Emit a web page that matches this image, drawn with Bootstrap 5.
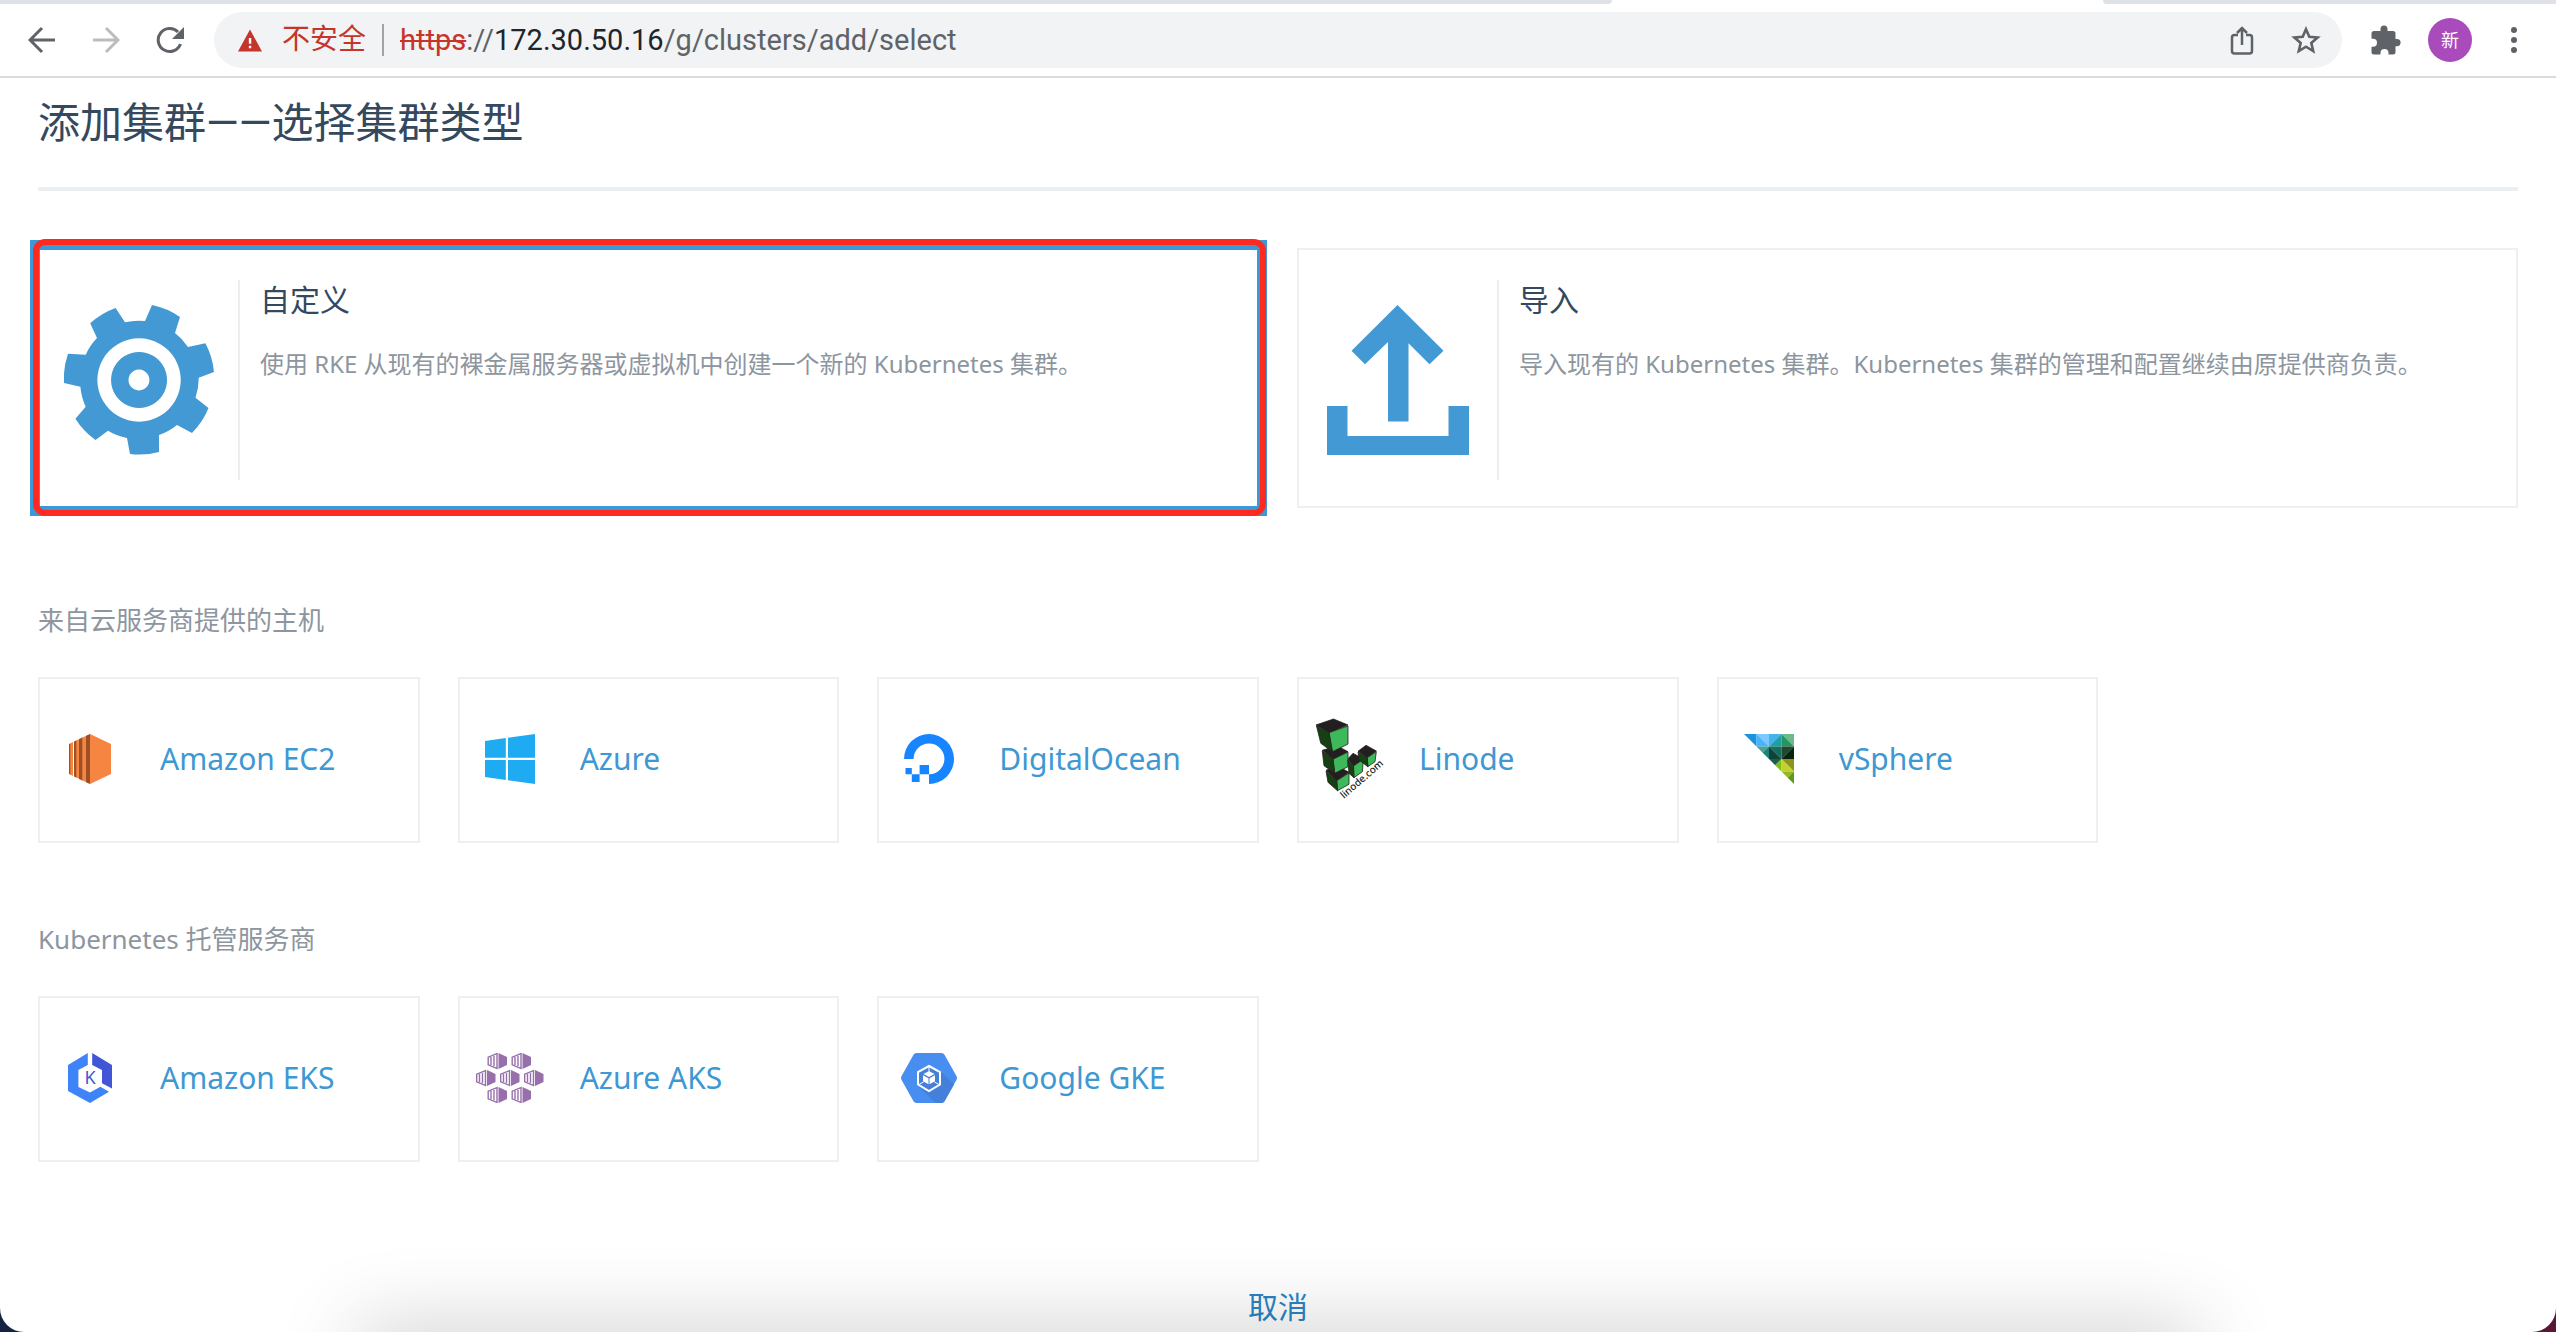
<!DOCTYPE html>
<html lang="zh-CN">
<head>
<meta charset="utf-8">
<meta name="viewport" content="width=device-width, initial-scale=1">
<title>添加集群——选择集群类型</title>
<link href="https://cdn.jsdelivr.net/npm/bootstrap@5.3.0/dist/css/bootstrap.min.css" rel="stylesheet">
<style>
  body { background: linear-gradient(90deg, #14233f 50%, #5a1735 50%); font-family: "Noto Sans", "Noto Sans CJK SC", sans-serif; color: #34495e; }
  .browser { background: #fff; border-radius: 0 0 24px 24px; }
  .tabstrip { height: 4px; background: #fff; }
  .tabstrip span { background: #dee1e6; }
  .tabs-left { width: 1612px; border-bottom-right-radius: 8px; }
  .tabs-right { width: 453px; border-bottom-left-radius: 8px; }
  .toolbar { height: 74px; padding: 0 10px; border-bottom: 2px solid #dadcdc; }
  .tool { width: 64px; height: 56px; color: #5f6368; }
  .omnibox { height: 56px; margin: 0 12px; padding: 0 4px 0 24px; background: #f1f3f4; border-radius: 28px; font: 28px/56px Roboto, "Noto Sans CJK SC", sans-serif; color: #5f6368; }
  .insecure { color: #c5352b; }
  .address { font-size: 29px; }
  .bar-sep { width: 2px; height: 32px; margin: 0 16px; background: #a0a4a8; }
  .avatar { width: 44px; height: 44px; background: #a94bba; color: #fff; font-size: 18px; line-height: 44px; }
  .page { padding: 16px 38px 0; }
  .page-title { font-family: Roboto, "Noto Sans CJK SC", sans-serif; font-size: 42px; line-height: 60px; padding-bottom: 33px; border-bottom: 4px solid #eceff1; margin-bottom: 57px; font-weight: 400; }
  .tiles { display: grid; gap: 38px; }
  .tiles-wide { grid-template-columns: repeat(2, 1fr); }
  .tiles-small { grid-template-columns: repeat(6, 1fr); }
  .tile { border: 2px solid #ecf0f0; background: #fff; color: #3d98d3; text-decoration: none; }
  .tile-wide { height: 260px; padding: 30px 0 26px; }
  .tile-wide .pic { width: 200px; border-right: 2px solid #eceff1; }
  .tile-wide .info { padding: 0 20px; }
  .tile-wide h2 { font-size: 30px; line-height: 40px; margin: 0 0 26px; font-weight: 400; color: #34495e; }
  .tile-wide p { font-size: 24px; line-height: 36px; margin: 0; color: #8d959e; }
  .picked { border-color: #3d98d8; box-shadow: 0 0 0 8px #3d98d8; }
  .marker { inset: -11px -9px -10px -7px; border: 6px solid #ff2a1f; border-radius: 12px; pointer-events: none; }
  .group-label { font-size: 26px; line-height: 38px; margin: 0 0 38px; color: #8d959e; font-weight: 400; }
  .label-hosts { margin-top: 93px; }
  .label-hosted { margin-top: 77px; }
  .tile-small { height: 166px; padding-bottom: 2px; font-size: 30px; line-height: 40px; }
  .tile-small .pic { width: 100px; margin-right: 20px; }
  .cancel { font-size: 30px; line-height: 44px; margin-top: 123px; color: #2a84c5; }
  .dock-shade { left: 14%; right: 14%; bottom: -40px; height: 40px; box-shadow: 0 0 80px rgba(0,0,0,.27); }
</style>
</head>
<body>
<div class="browser position-relative overflow-hidden min-vh-100">
  <header>
    <div class="tabstrip d-flex justify-content-between"><span class="tabs-left"></span><span class="tabs-right"></span></div>
    <div class="toolbar d-flex align-items-center">
      <button class="tool btn border-0 p-0" aria-label="后退"><svg width="28" height="28" viewBox="0 0 28 28" fill="none" stroke="currentColor" stroke-width="3"><path d="M27 14H3M14 2 2 14l12 12"/></svg></button>
      <button class="tool btn border-0 p-0" aria-label="前进"><svg width="28" height="28" viewBox="0 0 28 28" fill="none" stroke="#babcbe" stroke-width="3"><path d="M1 14h24M14 2l12 12-12 12"/></svg></button>
      <button class="tool btn border-0 p-0" aria-label="重新加载"><svg width="30" height="28" viewBox="0 0 30 28"><path d="M25.500 18A11.500 11.500 0 1 1 23 6" fill="none" stroke="currentColor" stroke-width="3"/><path d="M29 1v12H17z" fill="currentColor"/></svg></button>
      <div class="omnibox d-flex align-items-center flex-grow-1">
        <svg width="24" height="23" viewBox="0 0 25 23" class="me-3"><path d="M12.500 0 25 23H0z" fill="#c5352b"/><path d="M11.300 9h2.500v6h-2.500zM11.300 17h2.500v2.600h-2.500z" fill="#fff"/></svg>
        <span class="insecure ms-1">不安全</span>
        <span class="bar-sep"></span>
        <span class="address flex-grow-1"><span class="insecure text-decoration-line-through">https</span>://<span class="text-dark">172.30.50.16</span>/g/clusters/add/select</span>
        <button class="tool btn border-0 p-0" aria-label="分享"><svg width="24" height="30" viewBox="0 0 24 30" fill="none" stroke="currentColor" stroke-width="2.500"><path d="M8 10H4.500Q2 10 2 12.500V26q0 2.500 2.500 2.500h15Q22 28.500 22 26V12.500Q22 10 19.500 10H16M12 20V3M7 8l5-5 5 5"/></svg></button>
        <button class="tool btn border-0 p-0" aria-label="收藏"><svg width="30" height="28" viewBox="0 0 30 28" fill="none" stroke="currentColor" stroke-width="2.600"><path d="m15 3.200 3.300 7.600 8.300.7-6.300 5.400 1.900 8.100-7.200-4.300L7.800 25l1.900-8.100-6.300-5.400 8.300-.7z"/></svg></button>
      </div>
      <button class="tool btn border-0 p-0" aria-label="扩展程序"><svg width="30" height="30" viewBox="0 0 30 30"><path d="M3 6h6.500V4a3.500 3.500 0 0 1 7 0v2H22q2.500 0 2.500 2.500V14H26a3.600 3.600 0 0 1 0 7.200h-1.500V27q0 2.500-2.500 2.500h-4.500V28a4 4 0 0 0-8 0v1.500H3Q.5 29.500.5 27v-5.200H2a4 4 0 0 0 0-8H.5V8.500Q.5 6 3 6z" fill="currentColor"/></svg></button>
      <button class="tool btn border-0 p-0 d-flex align-items-center justify-content-center" aria-label="用户"><span class="avatar rounded-circle">新</span></button>
      <button class="tool btn border-0 p-0" aria-label="菜单"><svg width="8" height="28" viewBox="0 0 8 28" fill="currentColor"><circle cx="4" cy="4" r="3"/><circle cx="4" cy="14" r="3"/><circle cx="4" cy="24" r="3"/></svg></button>
    </div>
  </header>

  <main class="page">
    <h1 class="page-title">添加集群——选择集群类型</h1>

    <div class="tiles tiles-wide">
      <a href="#" class="tile tile-wide picked d-flex position-relative">
        <span class="pic d-flex align-items-center justify-content-center flex-shrink-0">
          <svg width="150" height="150" viewBox="0 0 150 150" fill="#4299d4"><path fill-rule="evenodd" d="M63 133 66 149A75 75 0 0 0 95 147V130A59 59 0 0 0 113 120L128 128A75 75 0 0 0 144.500 103L131.500 92.700A59 59 0 0 0 134.700 72.700L150 67A75 75 0 0 0 141.400 38.300L124 42A59 59 0 0 0 111 28L116 12A75 75 0 0 0 88 0L81 16A59 59 0 0 0 61 17.300L51.600 3A75 75 0 0 0 26.200 18.300L33 33A59 59 0 0 0 21.700 49.700L4 48.700A75 75 0 0 0 0 78L16.400 81.700A59 59 0 0 0 21.700 101.700L11.400 113.700A75 75 0 0 0 31.500 135L44 125.700A59 59 0 0 0 63 133zM75 33.300a41.700 41.700 0 1 0 .1 0z"/><path fill-rule="evenodd" d="M75 47a28 28 0 1 0 .1 0zM75 64.500a10.500 10.500 0 1 1-.1 0z"/></svg>
        </span>
        <span class="info">
          <h2>自定义</h2>
          <p>使用 RKE 从现有的裸金属服务器或虚拟机中创建一个新的 Kubernetes 集群。</p>
        </span>
        <span class="marker position-absolute"></span>
      </a>
      <a href="#" class="tile tile-wide d-flex">
        <span class="pic d-flex align-items-center justify-content-center flex-shrink-0">
          <svg width="142" height="150" viewBox="0 0 142 150" fill="#4299d4"><path d="m70.500 0 46 45.700-14 13.600-21-21V116.500H61V37L38 59.300 24.500 45.700zM0 101h20.500v30h101v-30H142v49H0z"/></svg>
        </span>
        <span class="info">
          <h2>导入</h2>
          <p>导入现有的 Kubernetes 集群。Kubernetes 集群的管理和配置继续由原提供商负责。</p>
        </span>
      </a>
    </div>

    <h2 class="group-label label-hosts">来自云服务商提供的主机</h2>
    <div class="tiles tiles-small">
      <a href="#" class="tile tile-small d-flex align-items-center">
        <span class="pic d-flex justify-content-center"><svg width="42" height="50" viewBox="0 0 42 50"><path fill="#f58540" d="m21 0 21 10v30L21 50zM1 9.500 4 8v34l-3-1.500zM6 7l5-2v40l-5-2zM12 4l5-2v46l-5-2z"/><path fill="#9d5025" d="m17 1.700 4-1.700v50l-4-1.700zM10 5l3.300-1.500v43L10 45zM5 7.500 7.300 6.500v37L5 42.500zM0 10l1.300-.6v31.200L0 40z"/></svg></span>Amazon EC2</a>
      <a href="#" class="tile tile-small d-flex align-items-center">
        <span class="pic d-flex justify-content-center"><svg width="50" height="50" viewBox="0 0 50 50" fill="#1fabf2"><path d="m0 7 20.800-2.900v19.600H0zM23 3.800 50 0v23.700H23zM0 26h20.800v19.900L0 43zM23 26h27v24l-27-3.800z"/></svg></span>Azure</a>
      <a href="#" class="tile tile-small d-flex align-items-center">
        <span class="pic d-flex justify-content-center"><svg width="50" height="50" viewBox="0 0 50 50" fill="#1785ff"><path d="M0 25a25 25 0 1 1 25 25v-9.700A15.400 15.400 0 1 0 9.600 25zM15.600 31H25v9.300h-9.400zM7.800 40.300h7.800V48H7.800zM1.500 34h6.300v6.300H1.500z"/></svg></span>DigitalOcean</a>
      <a href="#" class="tile tile-small d-flex align-items-center">
        <span class="pic d-flex justify-content-center"><svg width="66" height="80" viewBox="0 0 66 80" overflow="visible"><g stroke="#231f20" stroke-width=".8" stroke-linejoin="round">
          <path fill="#231f20" d="M17.500 0 32 6 13 13.700 0 6zM21.500 27 32 32.700 17 40.300 6.300 31.300zM10 51.300 21.500 47 33 53.300 20.700 61.700zM37 34.300 47.300 40 37.500 47 31.800 40zM50 26.300 60.300 32 51.300 38.700 42 32.300z"/>
          <path fill="#3db85a" d="M13 13.700 32 7v18l-15.500 7.700zM17 40.300 32 33v14.700l-13.300 6.600zM20.700 61.700 33 54v11.300l-11.500 6.400zM37.500 47l9.800-6.500-.9 12.200-8.500 6zM51.300 38.700l9-6L59 42.700l-7.200 5z"/>
          <path fill="#164012" d="m.5 7 12.500 6.700 3.300 19-11.500-8.400zM6.300 32 17 40.300l1.700 14L8 46.700zM10 52l10.700 9.700.8 10L12 63.300zM31.800 41l5.700 6 .4 11.700-4.900-4.400zM42 33l9.300 5.700.5 9-8.600-6.700z"/></g>
          <text x="0" y="0" transform="translate(28 80) rotate(-41)" font-family="Noto Sans, sans-serif" font-weight="500" font-size="10" fill="#231f20">linode.com</text></svg></span>Linode</a>
      <a href="#" class="tile tile-small d-flex align-items-center">
        <span class="pic d-flex justify-content-center"><svg width="50" height="50" viewBox="0 0 50 50">
          <path fill="#1e93dc" d="M0 0h12.500v12.500z"/><path fill="#7cc8ff" d="M12.500 0H25v12.500z"/><path fill="#47b4fb" d="M12.500 0 25 12.500H12.500z"/><path fill="#45b2ec" d="M25 0h12.500L25 12.500z"/><path fill="#1f9fa2" d="M37.500 0v12.500H25z"/><path fill="#6cba8b" d="M37.500 0H50v12.500z"/><path fill="#229560" d="m37.500 0 12.500 12.500H37.500z"/><path fill="#4fa096" d="M12.500 12.500H25L18.700 18.700z"/><path fill="#178676" d="M25 12.500V25l-6.300-6.300z"/><path fill="#136f5d" d="M25 12.500h12.500V25z"/><path fill="#10423c" d="M25 12.500 37.500 25H25z"/><path fill="#21482a" d="M37.500 12.500H50L37.500 25z"/><path fill="#05260d" d="M50 12.500V25H37.500z"/><path fill="#195e51" d="M25 25h12.500l-6.300 6.200z"/><path fill="#7ebd20" d="M37.500 25v12.500l-6.300-6.300z"/><path fill="#8d9420" d="M37.500 25H50v12.500z"/><path fill="#c0d22e" d="m37.500 25 12.500 12.500H37.500z"/><path fill="#95b825" d="M37.500 37.500H50l-6.300 6.300z"/><path fill="#5b9a1c" d="M50 37.500V50l-6.300-6.200z"/></svg></span>vSphere</a>
    </div>

    <h2 class="group-label label-hosted">Kubernetes 托管服务商</h2>
    <div class="tiles tiles-small">
      <a href="#" class="tile tile-small d-flex align-items-center">
        <span class="pic d-flex justify-content-center"><svg width="44" height="50" viewBox="0 0 44 50"><path fill="#3f83f8" d="M19.800 0v12l-9.400 5v17L22 39.500l10.400-5.800 8.600 5L22 50 0 38V12z"/><path fill="#4056d6" d="M24.200 0 44 12v23.500l-10-5.300V17l-9.800-5z"/><text x="22" y="31" text-anchor="middle" font-family="Noto Sans, sans-serif" font-size="18" fill="#4056d6">K</text></svg></span>Amazon EKS</a>
      <a href="#" class="tile tile-small d-flex align-items-center">
        <span class="pic d-flex justify-content-center"><svg width="68" height="50" viewBox="0 0 68 50">
          <defs><g id="box"><path fill="#966fab" d="m11 0 8.500 4v8L11 16z"/><path fill="none" stroke="#966fab" stroke-width="1.400" d="M9.500.6.700 4.200v7.600l8.800 3.600zM3.500 4v8M6.500 3v10"/></g></defs>
          <use href="#box" x="11.500"/><use href="#box" x="35.500"/><use href="#box" y="17"/><use href="#box" x="24" y="17"/><use href="#box" x="48" y="17"/><use href="#box" x="11.500" y="34"/><use href="#box" x="35.500" y="34"/></svg></span>Azure AKS</a>
      <a href="#" class="tile tile-small d-flex align-items-center">
        <span class="pic d-flex justify-content-center"><svg width="56" height="50" viewBox="0 0 56 50"><path fill="#488df0" d="M15.500 0h25q2 0 3 1.800L55.400 23q1.200 2 0 4L43.500 48.200q-1 1.800-3 1.800h-25q-2 0-3-1.800L.6 27q-1.200-2 0-4L12.500 1.800q1-1.800 3-1.800z"/><path fill="#447fdb" d="m40 18.500 13 13-9.500 16.700q-1 1.800-3 1.800H35L16.500 32.500 28 25z"/><path fill="#447fdb" stroke="#fff" stroke-width="2" d="m28 13 11 6v12.500L28 38l-11-6.500V19z"/><path fill="#fff" d="m28 18 5.500 3L28 24l-5.500-3zM22 22.300l5.500 3v6L22 28.300zM34 22.300v6l-5.500 3v-6z"/><path d="M28 13v5M18 31.500l4.500-2.500M38 31.500 33.500 29" stroke="#fff"/></svg></span>Google GKE</a>
    </div>

    <div class="text-center"><button class="cancel btn border-0 rounded-0 p-0">取消</button></div>
  </main>
  <div class="dock-shade position-absolute pe-none"></div>
</div>
<script src="https://cdn.jsdelivr.net/npm/bootstrap@5.3.0/dist/js/bootstrap.bundle.min.js"></script>
</body>
</html>
